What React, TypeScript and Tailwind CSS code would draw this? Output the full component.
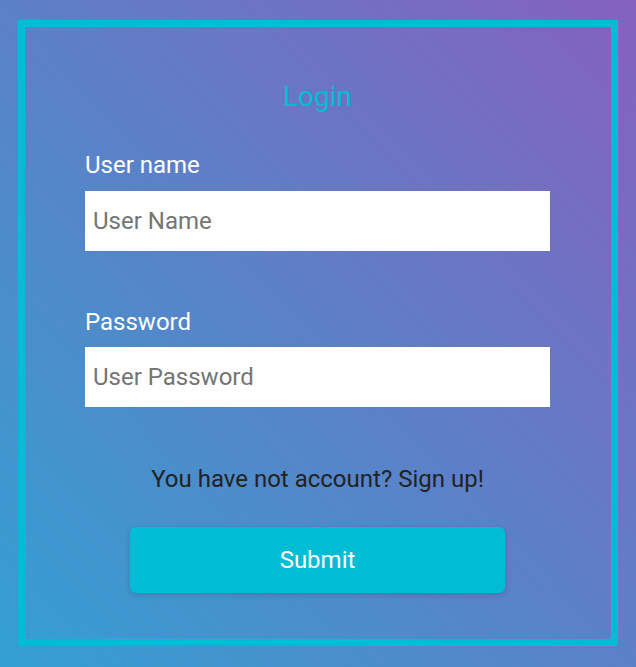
import React from 'react';

// Login card on a blue-to-purple gradient.
export default function App() {
  return (
    <div className="min-h-[667px] w-full bg-[linear-gradient(to_top_right,#33a0d1,#8561bf)] pt-[20px] pb-[21px] pl-[18px] pr-[18px] font-['Roboto',sans-serif]">
      <div className="flex h-[626px] flex-col border-[7px] border-[#00bcd4] pl-[60px] pr-[61px] pt-[53px]">
        <h1 className="text-center text-[28px] leading-[33px] font-normal text-[#00bcd4]">Login</h1>

        <label className="mt-[38px] text-[24px] leading-[28px] text-white">User name</label>
        <input
          className="mt-[12px] h-[60px] w-full bg-white px-[8px] text-[24px] text-[#333] placeholder:text-[#757575] outline-none"
          placeholder="User Name"
        />

        <label className="mt-[57px] text-[24px] leading-[28px] text-white">Password</label>
        <input
          type="password"
          className="mt-[11px] h-[60px] w-full bg-white px-[8px] text-[24px] text-[#333] placeholder:text-[#757575] outline-none"
          placeholder="User Password"
        />

        <p className="mt-[58px] text-center text-[24px] leading-[28px] text-[#222]">You have not account? Sign up!</p>

        <button className="mx-auto mt-[34px] h-[66px] w-[375px] rounded-[6px] bg-[#00bcd4] text-[24px] text-white shadow-[0_2px_6px_rgba(0,0,0,0.15)]">
          Submit
        </button>
      </div>
    </div>
  );
}
